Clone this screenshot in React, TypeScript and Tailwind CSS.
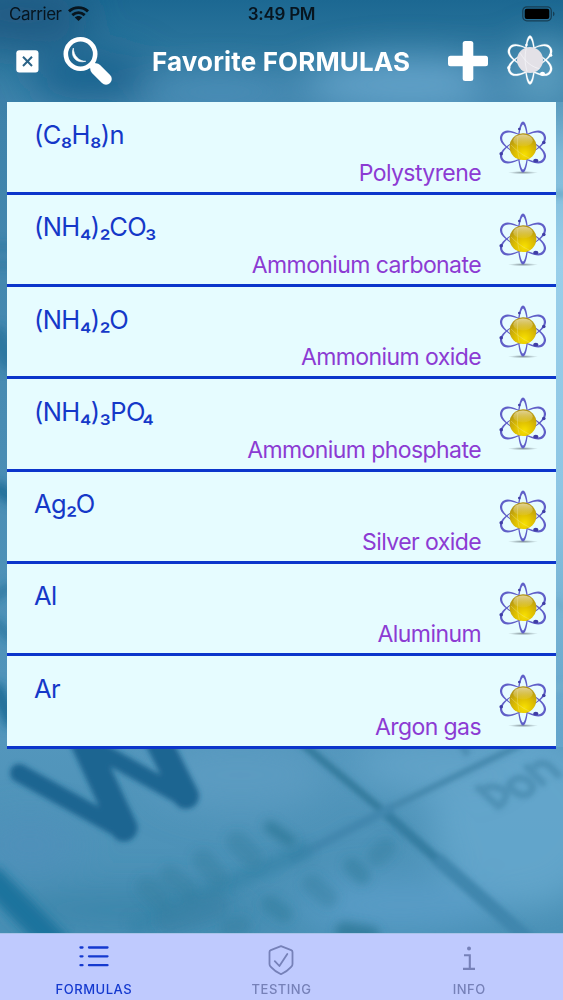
import { useState } from 'react';

interface Formula {
  formula: string;
  name: string;
}

const formulas: Formula[] = [
  { formula: '(C₈H₈)n', name: 'Polystyrene' },
  { formula: '(NH₄)₂CO₃', name: 'Ammonium carbonate' },
  { formula: '(NH₄)₂O', name: 'Ammonium oxide' },
  { formula: '(NH₄)₃PO₄', name: 'Ammonium phosphate' },
  { formula: 'Ag₂O', name: 'Silver oxide' },
  { formula: 'Al', name: 'Aluminum' },
  { formula: 'Ar', name: 'Argon gas' },
];

// orbit ring, thick at both ends and thin along the sides
const ORBIT =
  'M0-25.5C3.4-25.5 5.3-14 5.3 0S3.4 25.5 0 25.5S-5.3 14-5.3 0S-3.4-25.5 0-25.5ZM0-22.6C-1.6-22.6-4.5-13-4.5 0S-1.6 22.6 0 22.6S4.5 13 4.5 0S1.6-22.6 0-22.6Z';
const ORBIT_SIDE =
  'M0-25.4C9-25.4 9.6-13 9.6 0S9 25.4 0 25.4S-9.6 13-9.6 0S-9-25.4 0-25.4ZM0-23.2C-6.8-23.2-8.8-12-8.8 0S-6.8 23.2 0 23.2S8.8 12 8.8 0S6.8-23.2 0-23.2Z';

function AtomIcon() {
  return (
    <svg className="h-[60px] w-[52px] shrink-0" viewBox="-26 -27 52 60">
      <ellipse cx="0" cy="25.6" rx="15" ry="1.6" fill="url(#atomShadow)" />
      <g fill="#605fc8" fillRule="evenodd">
        <path d={ORBIT} />
        <path d={ORBIT_SIDE} transform="rotate(60)" />
        <path d={ORBIT_SIDE} transform="rotate(-60)" />
      </g>
      <circle r="13.4" cy="-0.3" fill="url(#atomCore)" />
      <ellipse cx="0" cy="-6.5" rx="9.8" ry="6" fill="url(#atomGloss)" />
      <path d="M-5.2-11C-6 -3-5.5 6-3.6 12M-12-2C-7 3-1 8 6 11" fill="none" stroke="#eee5a0" strokeWidth="0.6" opacity="0.6" />
      <g fill="#403ea6">
        <circle cx="-3.7" cy="-18" r="1.3" />
        <circle cx="20.8" cy="-4.5" r="1.8" />
        <circle cx="-21.8" cy="6.8" r="1.8" />
        <ellipse cx="12.8" cy="13.7" rx="2.6" ry="1.9" />
      </g>
    </svg>
  );
}

function WhiteAtomIcon() {
  return (
    <svg className="h-[52px] w-[50px]" viewBox="-25 -27 50 54">
      <g fill="#fff" fillRule="evenodd" stroke="#fff" strokeWidth="0.2">
        <path d={ORBIT} />
        <path d={ORBIT_SIDE} transform="rotate(60)" />
        <path d={ORBIT_SIDE} transform="rotate(-60)" />
      </g>
      <circle r="13.5" fill="#e3e1e7" />
      <path d="M-10-7C-5 2 3 8 10 9M-4-12C-6-3-5 6-3 12" fill="none" stroke="#f5f4f8" strokeWidth="0.8" />
      <g fill="#fff">
        <circle cx="-3.7" cy="-15.5" r="1.3" />
        <circle cx="21.5" cy="-5" r="1.7" />
        <circle cx="-22" cy="8" r="1.7" />
        <ellipse cx="13" cy="14.4" rx="2.6" ry="2.2" />
      </g>
    </svg>
  );
}

// Blurred periodic table photo behind the whole screen
function Backdrop() {
  return (
    <svg className="absolute inset-0 h-full w-full" viewBox="0 0 563 1000" preserveAspectRatio="none">
      <defs>
        <linearGradient id="base" x1="0" y1="0" x2="0" y2="1">
          <stop offset="0" stopColor="#1c6892" />
          <stop offset="0.06" stopColor="#2f789f" />
          <stop offset="0.1" stopColor="#3d82aa" />
          <stop offset="0.74" stopColor="#5396bc" />
          <stop offset="0.93" stopColor="#4990b6" />
        </linearGradient>
        <linearGradient id="right" x1="0" y1="0" x2="0" y2="1">
          <stop offset="0" stopColor="#5c9dc0" />
          <stop offset="0.08" stopColor="#7cb9d8" />
          <stop offset="0.25" stopColor="#99cfea" />
          <stop offset="0.6" stopColor="#8dc6e4" />
          <stop offset="0.8" stopColor="#74b2d3" />
          <stop offset="1" stopColor="#62a3ca" />
        </linearGradient>
        <radialGradient id="atomCore" cx="0.55" cy="0.8" r="0.85">
          <stop offset="0" stopColor="#f8e100" />
          <stop offset="0.4" stopColor="#dfc000" />
          <stop offset="1" stopColor="#a78a18" />
        </radialGradient>
        <linearGradient id="atomGloss" x1="0" y1="0" x2="0" y2="1">
          <stop offset="0" stopColor="#f3e9c0" stopOpacity="0.75" />
          <stop offset="1" stopColor="#e4d47a" stopOpacity="0.15" />
        </linearGradient>
        <radialGradient id="atomShadow">
          <stop offset="0" stopColor="#85959b" />
          <stop offset="1" stopColor="#85959b" stopOpacity="0" />
        </radialGradient>
        <filter id="b2" x="-20%" y="-20%" width="140%" height="140%"><feGaussianBlur stdDeviation="2.4" /></filter>
        <filter id="b4" x="-20%" y="-20%" width="140%" height="140%"><feGaussianBlur stdDeviation="5" /></filter>
        <filter id="b20" x="-80%" y="-80%" width="260%" height="260%"><feGaussianBlur stdDeviation="18" /></filter>
      </defs>
      <rect width="563" height="1000" fill="url(#base)" />
      <rect x="556" y="102" width="7" height="645" fill="url(#right)" />

      {/* light and dark patches */}
      <g filter="url(#b20)">
        <ellipse cx="20" cy="15" rx="70" ry="30" fill="#205b84" />
        <ellipse cx="90" cy="75" rx="60" ry="25" fill="#1c638f" />
        <ellipse cx="220" cy="92" rx="80" ry="16" fill="#4f92bb" />
        <ellipse cx="410" cy="85" rx="110" ry="28" fill="#62a1c8" />
        <ellipse cx="545" cy="75" rx="30" ry="35" fill="#5b9dbf" />
        <ellipse cx="490" cy="75" rx="16" ry="20" fill="#397fa8" />
        <ellipse cx="520" cy="820" rx="90" ry="90" fill="#66a8ce" opacity="0.85" />
        <ellipse cx="430" cy="765" rx="80" ry="28" fill="#62a3c8" />
        <ellipse cx="240" cy="775" rx="90" ry="35" fill="#5c9bc1" />
        <ellipse cx="130" cy="910" rx="130" ry="18" fill="#3a84a9" />
        <ellipse cx="30" cy="845" rx="50" ry="25" fill="#5090ba" />
        <ellipse cx="400" cy="905" rx="100" ry="25" fill="#5a9dc7" />
      </g>
      <path d="M554 194H565M554 600L565 610M552 690L565 684" stroke="#6fadcc" strokeWidth="8" filter="url(#b2)" />

      {/* left margin streaks */}
      <g fill="none" stroke="#236f99" filter="url(#b4)">
        <path d="M-8 330L14 366" strokeWidth="22" opacity="0.7" />
        <path d="M-8 247H12M-6 265H12" strokeWidth="7" opacity="0.6" />
        <path d="M-6 485L14 500" strokeWidth="14" />
        <path d="M-6 600C0 590 8 590 12 585M-6 620L12 640" strokeWidth="8" opacity="0.8" />
        <path d="M-6 685L14 725" strokeWidth="16" />
      </g>

      {/* cell borders */}
      <g fill="none" filter="url(#b2)">
        <path d="M292 735L384 812" stroke="#347b9e" strokeWidth="8" />
        <path d="M384 812L440 862" stroke="#357da1" strokeWidth="10" />
        <path d="M436 858L535 945" stroke="#4086ad" strokeWidth="14" />
        <path d="M520 745L390 808" stroke="#4487ac" strokeWidth="6" />
        <path d="M393 807L290 860" stroke="#4287ae" strokeWidth="9" />
      </g>
      <path d="M310 848L130 928" stroke="#3984a9" strokeWidth="18" opacity="0.7" filter="url(#b4)" />
      <path d="M-12 875L60 948" stroke="#1e739d" strokeWidth="26" filter="url(#b4)" />

      {/* big W */}
      <g fill="none" stroke="#1d6591" strokeLinecap="round" strokeLinejoin="round" filter="url(#b2)">
        <path d="M19 773L126 832" strokeWidth="18" />
        <path d="M124 828L82 738" strokeWidth="27" />
        <path d="M84 742L186 799" strokeWidth="17" />
        <path d="M186 796L155 735" strokeWidth="26" />
      </g>

      {/* unreadable small lettering */}
      <g fill="none" stroke="#347e9f" strokeLinecap="round" filter="url(#b4)">
        <path d="M270 827L290 841" strokeWidth="12" />
        <path d="M237 842L252 857M203 860L217 877M170 876L187 890M147 887L160 900" strokeWidth="22" opacity="0.45" />
        <path d="M170 920L215 905" strokeWidth="28" opacity="0.4" />
        <path d="M386 848L377 856M312 884L328 898M230 928L241 926" strokeWidth="20" opacity="0.45" />
        <path d="M352 866L362 876M270 904L284 914" strokeWidth="17" opacity="0.6" />
        <path d="M345 932L370 936" strokeWidth="20" />
      </g>
      <g fill="none" stroke="#4284a8" strokeWidth="7" opacity="0.6" filter="url(#b2)">
        <path d="M476 786L500 808M483 789C492 784 508 789 506 796C504 803 500 806 497 807M509 785C518 799 530 797 533 788C530 777 515 774 509 785ZM525 765L545 785M533 767C545 759 548 764 560 777M461 744L468 755" />
      </g>
    </svg>
  );
}

function StatusBar() {
  return (
    <div className="grid h-[29px] grid-cols-3 items-center pl-[9px] pr-[7px] text-[17px] text-[#07151f]">
      <div className="flex items-center gap-[6px]">
        <span className="tracking-[-0.45px]">Carrier</span>
        <svg className="-mt-0.5 h-[15px] w-[21px]" viewBox="0 0 21 15" fill="none" stroke="#07151f" strokeWidth="2.9">
          <path d="M1 5.4C6.4.4 14.6.4 20 5.4M4.3 9.2C8 5.9 13 5.9 16.7 9.2" />
          <path d="M6.8 11.5C9 9.5 12 9.5 14.2 11.5L10.5 15Z" fill="#07151f" stroke="none" />
        </svg>
      </div>
      <span className="-ml-0.5 text-center font-semibold tracking-[-0.25px]">3:49 PM</span>
      <svg className="-mt-0.5 h-[16px] w-[34px] justify-self-end" viewBox="0 0 34 16">
        <rect x="0.8" y="0.8" width="28.5" height="14" rx="4" fill="none" stroke="#173e54" strokeWidth="1.2" />
        <rect x="2.7" y="2.7" width="24.6" height="10.2" rx="2" fill="#000" />
        <path d="M31 5.5C33 6.3 33 9.5 31 10.2Z" fill="#173e54" />
      </svg>
    </div>
  );
}

const tabs = ['FORMULAS', 'TESTING', 'INFO'];

function TabIcon({ tab }: { tab: string }) {
  if (tab === 'FORMULAS') {
    return (
      <svg className="-mt-1 mb-1 h-8 w-8" viewBox="0 0 32 32" stroke="currentColor" strokeWidth="2.3" strokeLinecap="round">
        <path d="M2.5 7.5H4.5M11 7.5H29.5M2.5 16.3H4.5M11 16.3H29.5M2.5 25.2H4.5M11 25.2H29.5" />
      </svg>
    );
  }
  if (tab === 'TESTING') {
    return (
      <svg className="h-8 w-8" viewBox="0 0 32 32" fill="none" stroke="currentColor" strokeWidth="1.8" strokeLinecap="round" strokeLinejoin="round">
        <path d="M16 2.2L26.2 6.1Q27.5 6.6 27.5 8V20Q27.5 21.7 26.2 22.8Q22.3 27.2 16 30.2Q9.7 27.2 5.8 22.8Q4.5 21.7 4.5 20V8Q4.5 6.6 5.8 6.1Z" />
        <path d="M9.8 17.2L14.4 22L22.3 10" />
      </svg>
    );
  }
  return (
    <svg className="h-8 w-8" viewBox="0 0 32 32" fill="none" stroke="currentColor" strokeWidth="2.1">
      <circle cx="16" cy="4.4" r="2" fill="currentColor" stroke="none" />
      <path d="M11 11.2H16.8V24.5M10 24.9H22" />
    </svg>
  );
}

export default function App() {
  const [active, setActive] = useState('FORMULAS');

  return (
    <div className="relative h-[1000px] w-[563px] overflow-hidden font-['Inter',sans-serif]">
      <Backdrop />
      <div className="relative flex h-full flex-col">
        <StatusBar />

        {/* Header */}
        <header className="flex h-[73px] items-center pb-[7px] pl-4 pr-2 text-white">
          <button className="-mt-0.5" aria-label="Close">
            <svg className="h-[23px] w-[23px]" viewBox="0 0 23 23">
              <rect x="0.3" y="0.3" width="22.2" height="22.2" rx="3" fill="#fff" />
              <path d="M7 6.8L16 16M16 6.8L7 16" stroke="#2b6387" strokeWidth="2" />
            </svg>
          </button>
          <button className="-mt-0.5 ml-6" aria-label="Search">
            <svg className="h-[50px] w-[50px]" viewBox="0 0 50 50" fill="none" stroke="#fff">
              <circle cx="17.5" cy="18" r="14.7" strokeWidth="4.6" />
              <path d="M33 33L43 43" strokeWidth="11.5" strokeLinecap="round" />
              <path d="M26.5 31.5L31.5 26.5L38 33L33 38Z" fill="#fff" stroke="none" />
              <path d="M10.3 12C7 20 13 28 22.8 25.3C16 25.2 10.7 20 10.3 12Z" fill="#fff" strokeWidth="0.6" />
            </svg>
          </button>
          <h1 className="-mt-0.5 ml-[39px] w-[259px] whitespace-nowrap text-[26px] font-bold tracking-[0.15px]">
            Favorite FORMULAS
          </h1>
          <button className="-mt-0.5 ml-[37px]" aria-label="Add">
            <svg className="h-10 w-10" viewBox="0 0 40 40" fill="#fff">
              <rect x="14.7" width="10.6" height="40" rx="2.5" />
              <rect y="14.7" width="40" height="10.6" rx="2.5" />
            </svg>
          </button>
          <button className="-mt-1 ml-auto" aria-label="Atoms">
            <WhiteAtomIcon />
          </button>
        </header>

        {/* Formula list */}
        <ul className="mx-[7px] bg-[#e6fcff] pt-[0.5px]">
          {formulas.map((item) => (
            <li key={item.name} className="flex h-[92.3px] border-b-[3px] border-[#0c35cb] pl-[27px] pr-[7px]">
              <div className="flex flex-1 flex-col justify-between pb-1 pt-[16.5px]">
                <span className="text-[25.5px] leading-8 tracking-[-0.6px] text-[#1538c8]">{item.formula}</span>
                <span className="mr-[16px] self-end text-[23px] leading-[30px] tracking-[-0.58px] text-[#8c3bd3]">
                  {item.name}
                </span>
              </div>
              <div className="pt-[17px]">
                <AtomIcon />
              </div>
            </li>
          ))}
        </ul>

        {/* Tab bar */}
        <nav className="mt-auto grid h-[67px] grid-cols-3 border-t border-[#a9c3e8] bg-[#bfcafe]">
          {tabs.map((tab) => (
            <button
              key={tab}
              onClick={() => setActive(tab)}
              className={`flex flex-col items-center pt-[10px] ${active === tab ? 'text-[#1439cf]' : 'text-[#7681b8]'}`}
            >
              <TabIcon tab={tab} />
              <span className="mt-[3px] text-[13px] font-medium leading-5 tracking-[0.5px]">{tab}</span>
            </button>
          ))}
        </nav>
      </div>
    </div>
  );
}
